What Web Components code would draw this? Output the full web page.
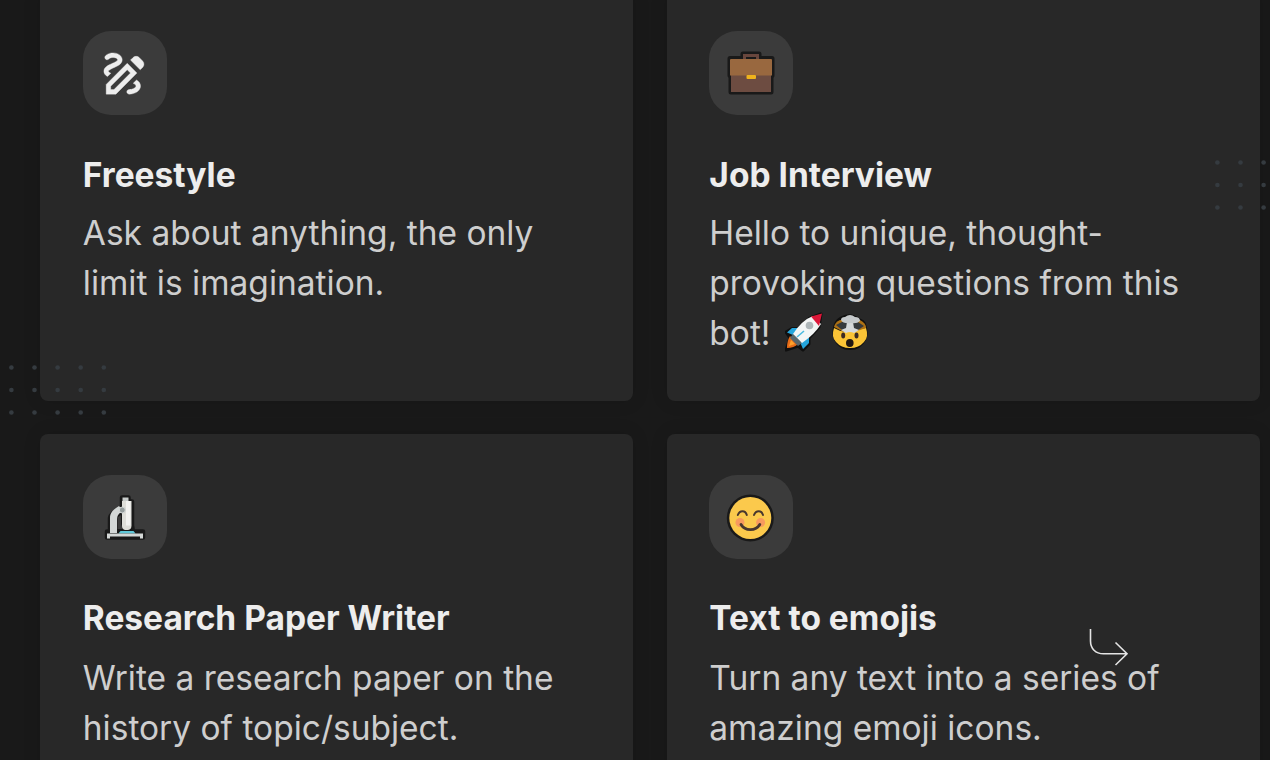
<!DOCTYPE html>
<html lang="en">
<head>
<meta charset="utf-8">
<meta name="viewport" content="width=device-width, initial-scale=1.0" />
<title>Bots</title>
<style>
    html,body {width:100%;height:100%;overflow:hidden;padding:0px;margin:0px}
    body {background:#191919;font-family:Inter, sans-serif;color:#cecece}
    bot-card:nth-child(n+3) {--text-gap:9.8px}
</style>

<template id="t-grid">
    <style>
    :host {
        display:grid;
        grid-template-columns:593px 593px;
        grid-template-rows:410.3px 410.3px;
        gap:33.5px;
        padding-left:40.3px;
        margin-top:-9.8px;
    }
    </style>
    <slot></slot>
</template>

<template id="t-card">
    <style>
    :host {
        display:flex;
        flex-direction:column;
        align-items:flex-start;
        box-sizing:border-box;
        padding:40.8px 42.5px;
        background:#282828;
        border-radius:8px;
        box-shadow:0 0 18px rgba(0,0,0,.12);
    }
    .icon {
        width:84px;
        height:84px;
        border-radius:28px;
        background:#3b3b3b;
        display:flex;
        align-items:center;
        justify-content:center;
    }
    h3 {
        margin:34.5px 0 var(--text-gap, 8.6px);
        font-size:33.5px;
        line-height:50px;
        font-weight:700;
        color:#ededed;
    }
    p {
        margin:0;
        font-size:33.5px;
        line-height:50px;
        white-space:nowrap;
    }
    </style>
    <div class="icon"><slot name="icon"></slot></div>
    <h3><slot name="title"></slot></h3>
    <p><slot></slot></p>
</template>

<template id="t-dots">
    <style>
    :host {display:block;position:absolute;pointer-events:none}
    svg {display:block}
    </style>
    <svg fill="#353b40"></svg>
</template>

<template id="t-arrow">
    <style>
    :host {display:block;position:absolute;left:1085px;top:624px}
    svg {display:block}
    </style>
    <svg width="48" height="46" fill="none" stroke="#e4e4e4" stroke-width="1.6">
        <path d="M5.500 5v12c0 7.500 5 12.800 13 12.800H41.500M30.500 18.500L42 29.800 30.500 41"/>
    </svg>
</template>

<template id="t-icon">
    <style>
    :host {display:inline-block;vertical-align:-7px}
    svg {display:block}
    </style>
</template>

<template id="i-draw">
    <svg width="55" height="55" viewBox="0 0 24 24" fill="#ededed" stroke="#ededed" stroke-width=".15" style="margin:1px 0 0 0">
        <path d="M18.850 10.390l1.060-1.060c.78-.78.78-2.050 0-2.830L18.500 5.090c-.78-.78-2.050-.78-2.830 0l-1.060 1.060 4.240 4.240zM13.190 7.560L4 16.760V21h4.240l9.190-9.190-4.240-4.250zM7.410 19H6v-1.410l7.190-7.190 1.410 1.410L7.410 19zM19 17.500c0 2.190-2.540 3.500-5 3.500-.55 0-1-.45-1-1s.45-1 1-1c1.540 0 3-.73 3-1.500 0-.47-.48-.87-1.230-1.200l1.480-1.480c1.070.63 1.750 1.470 1.750 2.680zM4.580 13.350C3.610 12.790 3 12.060 3 11c0-1.800 1.890-2.630 3.560-3.360C7.590 7.180 9 6.560 9 6c0-.41-.78-1-2-1-1.260 0-1.800.61-1.830.64-.35.41-.98.46-1.400.12-.41-.34-.49-.95-.15-1.380C3.730 4.240 4.760 3 7 3s4 1.320 4 3c0 1.870-1.930 2.720-3.640 3.470C6.420 9.880 5 10.500 5 11c0 .31.43.6 1.070.86l-1.490 1.490z"/>
    </svg>
</template>

<template id="i-briefcase">
    <svg width="50" height="50" style="margin:1px 0 0 -1px">
        <g stroke="#191919" stroke-width="5" stroke-linejoin="round" fill="#191919">
            <path d="M17 9.500V5h16v4.500h13v17h-1V43H5V26.500H4v-17z"/>
        </g>
        <path fill="#68463d" d="M17 10V5h16v5h-3V8H20v2z"/>
        <path fill="#191919" d="M20 8h10v2H20z"/>
        <path fill="#6d4c41" d="M5 25h40v18H5z"/>
        <path fill="#99683f" d="M4 11q0-1 1-1h40q1 0 1 1v15.500H4z"/>
        <rect x="20.500" y="26" width="9.500" height="4" rx="1" fill="#efb31c"/>
    </svg>
</template>

<template id="i-microscope">
    <svg width="50" height="50" style="margin-top:2px">
        <g fill="#191919" stroke="#191919" stroke-width="4.500" stroke-linejoin="round">
            <path d="M22 4.500h6.500v4H32v24l1 6h10v6H7v-6h3V25q1-6 12-9z"/>
        </g>
        <path fill="#3b3b3b" d="M17.500 24.500l3.500-2.500v9l2 5h-5.500z"/>
        <path fill="#d3d7d6" d="M10 40V25c0-6 4-9 9-12l4 5c-4 2-6 4-6 9v13z"/>
        <path fill="#c8cccb" d="M22.500 4.500h6v4h-6z"/>
        <path fill="#deded9" d="M22 8h9.500v24.500q0 4-3.500 4.500h-3q-3-1-3-4z"/>
        <path fill="#f2f2f0" d="M26 8h4.500v24.500H26z"/>
        <circle cx="22.300" cy="17" r="3" fill="#959d9d" stroke="#d3d7d6"/>
        <path fill="#5fc7d8" d="M18.500 40.500l2-2.500h13l2 2.500z"/>
        <path fill="#d3d7d6" d="M7 40.500h36v5h-3v-2H10v2H7z"/>
    </svg>
</template>

<template id="i-smile">
    <svg width="50" height="50" style="margin:2px 0 0 -2px">
        <circle cx="25.300" cy="25" r="23.500" fill="#191919"/>
        <circle cx="25.300" cy="25" r="21" fill="#fbc94c"/>
        <g fill="#f79a5e"><circle cx="15" cy="29.500" r="4.500"/><circle cx="35.600" cy="29.500" r="4.500"/></g>
        <g fill="none" stroke="#48372e" stroke-width="2" stroke-linecap="round">
            <path d="M12.800 22c2-5 7.500-5 9 0M29 22c2-5 7.500-5 9 0"/>
            <path stroke-width="2.800" d="M16 31.500c4 6.800 14.800 6.800 18.800 0"/>
        </g>
    </svg>
</template>

<template id="i-rocket">
    <svg width="40" height="40">
        <path d="M36 2l-12 4.500-11 10H7L1 20l4 6-4 12 12-4 5 4 6-6V26l10-11z" fill="#101010" stroke="#101010" stroke-width="3" stroke-linejoin="round"/>
        <path fill="#25a5dc" d="M13 16H7l-5 4.500 6 2.500zM24 25v6l-6 6-3-7z"/>
        <path fill="#e66b18" d="M5 24l8 8q-4 4-11 4 0-7 3-12z"/>
        <path fill="#ffa12b" d="M6 28l4 4-6 2z"/>
        <path fill="#59666b" d="M8 22l9 9-4 3-8-8z"/>
        <path fill="#f3f5f5" d="M8 22Q17 8 28 4l8 8Q30 22 17 31z"/>
        <path fill="#dc1739" d="M26 4.500L37 1.500 34 14z"/>
        <circle cx="24.500" cy="13.500" r="3.800" fill="#aeb6b9"/>
        <path stroke="#4bb9df" stroke-width="1.600" d="M12 25l7-6"/>
    </svg>
</template>

<template id="i-mindblown">
    <svg width="40" height="40" style="position:relative;top:1px">
        <path d="M10 4q10-6 19 1 6 2 7 6 3 9 0 16-5 10-16 10T4 27Q1 19 4 11q2-5 6-7z" fill="#101010"/>
        <path fill="#fbc436" d="M4 15q8 5 16 3t16-3q3 9-2 14-5 6-14 6T6 29Q1 24 4 15z"/>
        <path fill="#ad7114" d="M4 14q1-5 6-7l20 0q6 3 6 8l-9 3H12z"/>
        <path fill="#363a3d" d="M6 12l6-3h16l6 4-6 4H12z"/>
        <path fill="#d5d8d9" d="M17 9h6l1 6 5 2-5 3q-4-2-8 0l-5-3 5-2z"/>
        <path fill="#c5c9cb" d="M11 7q0-3 4-3 5-4 10 0 5 0 5 4-3 3-9 2-8 1-10-3z"/>
        <ellipse cx="13.200" cy="22.500" rx="2" ry="3" fill="#3c2b24"/>
        <ellipse cx="26.500" cy="22.500" rx="2" ry="3" fill="#3c2b24"/>
        <ellipse cx="19.800" cy="30" rx="3.800" ry="4" fill="#201712"/>
    </svg>
</template>
</head>
<body>
<bot-grid>
    <bot-card>
        <bot-icon slot="icon" name="draw"></bot-icon>
        <span slot="title">Freestyle</span>
        Ask about anything, the only<br>limit is imagination.
    </bot-card>
    <bot-card>
        <bot-icon slot="icon" name="briefcase"></bot-icon>
        <span slot="title">Job Interview</span>
        Hello to unique, thought-<br>provoking questions from this<br>bot! <bot-icon name="rocket" style="margin-left:5px"></bot-icon><bot-icon name="mindblown" style="margin-left:5px"></bot-icon>
    </bot-card>
    <bot-card>
        <bot-icon slot="icon" name="microscope"></bot-icon>
        <span slot="title">Research Paper Writer</span>
        Write a research paper on the<br>history of topic/subject.
    </bot-card>
    <bot-card>
        <bot-icon slot="icon" name="smile"></bot-icon>
        <span slot="title">Text to emojis</span>
        Turn any text into a series of<br>amazing emoji icons.
    </bot-card>
</bot-grid>
<dot-pattern cols="5" rows="3" style="left:8px;top:364px"></dot-pattern>
<dot-pattern cols="3" rows="3" style="left:1214px;top:158.5px"></dot-pattern>
<reply-arrow></reply-arrow>
</body>

<script>
function tmpl(id) { return document.getElementById(id).content.cloneNode(true) }

class BotGrid extends HTMLElement {
    connectedCallback() {
        this.attachShadow({mode: 'open'}).append(tmpl("t-grid"));
    }
}

class BotCard extends HTMLElement {
    connectedCallback() {
        this.attachShadow({mode: 'open'}).append(tmpl("t-card"));
    }
}

class BotIcon extends HTMLElement {
    connectedCallback() {
        this.attachShadow({mode: 'open'}).append(tmpl("t-icon"), tmpl("i-"+this.getAttribute("name")));
    }
}

class DotPattern extends HTMLElement {
    connectedCallback() {
        this.attachShadow({mode: 'open'}).append(tmpl("t-dots"));
        const cols=+this.getAttribute("cols"), rows=+this.getAttribute("rows");
        const svg=this.shadowRoot.querySelector("svg");
        svg.setAttribute("width", cols*23.2)
        svg.setAttribute("height", rows*22.5)
        let s="";
        for(let y=0;y<rows;y++)
            for(let x=0;x<cols;x++)
                s+=`<circle cx="${3.4+x*23.1}" cy="${3.5+y*22.5}" r="2.3"/>`;
        svg.innerHTML=s;
    }
}

class ReplyArrow extends HTMLElement {
    connectedCallback() {
        this.attachShadow({mode: 'open'}).append(tmpl("t-arrow"));
    }
}

customElements.define("bot-grid", BotGrid);
customElements.define("bot-card", BotCard);
customElements.define("bot-icon", BotIcon);
customElements.define("dot-pattern", DotPattern);
customElements.define("reply-arrow", ReplyArrow);
</script>
</html>
